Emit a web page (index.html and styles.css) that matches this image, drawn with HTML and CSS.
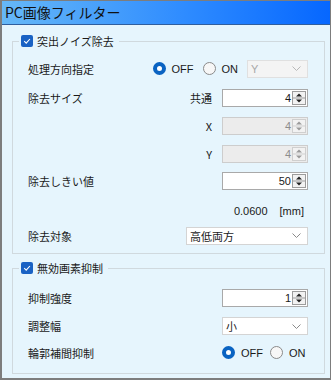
FILE: index.html
```html
<!DOCTYPE html>
<html>
<head>
<meta charset="UTF-8">
<title>PC画像フィルター</title>
<link rel="stylesheet" href="styles.css">
</head>
<body>
<div class="window">
	<div class="titlebar">PC画像フィルター</div>

	<fieldset class="group group1">
		<legend><span class="check"><svg width="12" height="12" viewBox="0 0 12 12"><polyline points="3.2,6.2 5.2,8.1 8.9,4" fill="none" stroke="#fff" stroke-width="1.1"/></svg></span>突出ノイズ除去</legend>
		<div class="rows rows1">
			<div class="row">
				<span class="label">処理方向指定</span>
				<div class="ctrl">
					<span class="radio"><i class="dot on"></i>OFF</span>
					<span class="radio"><i class="dot"></i>ON</span>
					<span class="combo dis small"><span>Y</span><svg width="9" height="5" viewBox="0 0 9 5"><polyline points="0.5,0.5 4.5,4.5 8.5,0.5" fill="none" stroke="#b8b8b8"/></svg></span>
				</div>
			</div>
			<div class="row">
				<span class="label">除去サイズ</span>
				<div class="ctrl">
					<span class="sub">共通</span>
					<span class="spin"><span class="val">4</span><svg width="14" height="14" viewBox="0 0 14 14"><rect x="0.5" y="0.5" width="13" height="13" fill="#f2f2f2" stroke="#9c9c9c"/><line x1="1" y1="7" x2="13" y2="7" stroke="#9c9c9c"/><polygon points="4,5.5 10,5.5 7,2.5" fill="#222"/><polygon points="4,8.5 10,8.5 7,11.5" fill="#222"/></svg></span>
				</div>
			</div>
			<div class="row">
				<span class="label"></span>
				<div class="ctrl">
					<span class="sub">X</span>
					<span class="spin dis"><span class="val">4</span><svg width="14" height="14" viewBox="0 0 14 14"><rect x="0.5" y="0.5" width="13" height="13" fill="#f2f2f2" stroke="#cfcfcf"/><line x1="1" y1="7" x2="13" y2="7" stroke="#cfcfcf"/><polygon points="4,5.5 10,5.5 7,2.5" fill="#9a9a9a"/><polygon points="4,8.5 10,8.5 7,11.5" fill="#9a9a9a"/></svg></span>
				</div>
			</div>
			<div class="row">
				<span class="label"></span>
				<div class="ctrl">
					<span class="sub">Y</span>
					<span class="spin dis"><span class="val">4</span><svg width="14" height="14" viewBox="0 0 14 14"><rect x="0.5" y="0.5" width="13" height="13" fill="#f2f2f2" stroke="#cfcfcf"/><line x1="1" y1="7" x2="13" y2="7" stroke="#cfcfcf"/><polygon points="4,5.5 10,5.5 7,2.5" fill="#9a9a9a"/><polygon points="4,8.5 10,8.5 7,11.5" fill="#9a9a9a"/></svg></span>
				</div>
			</div>
			<div class="row">
				<span class="label">除去しきい値</span>
				<div class="ctrl">
					<span class="spin"><span class="val">50</span><svg width="14" height="14" viewBox="0 0 14 14"><rect x="0.5" y="0.5" width="13" height="13" fill="#f2f2f2" stroke="#9c9c9c"/><line x1="1" y1="7" x2="13" y2="7" stroke="#9c9c9c"/><polygon points="4,5.5 10,5.5 7,2.5" fill="#222"/><polygon points="4,8.5 10,8.5 7,11.5" fill="#222"/></svg></span>
				</div>
			</div>
			<div class="row">
				<span class="label"></span>
				<div class="ctrl unit">
					<span>0.0600</span>
					<span>[mm]</span>
				</div>
			</div>
			<div class="row">
				<span class="label">除去対象</span>
				<div class="ctrl">
					<span class="combo wide"><span>高低両方</span><svg width="9" height="5" viewBox="0 0 9 5"><polyline points="0.5,0.5 4.5,4.5 8.5,0.5" fill="none" stroke="#8a8a8a"/></svg></span>
				</div>
			</div>
		</div>
	</fieldset>

	<fieldset class="group group2">
		<legend><span class="check"><svg width="12" height="12" viewBox="0 0 12 12"><polyline points="3.2,6.2 5.2,8.1 8.9,4" fill="none" stroke="#fff" stroke-width="1.1"/></svg></span>無効画素抑制</legend>
		<div class="rows rows2">
			<div class="row">
				<span class="label">抑制強度</span>
				<div class="ctrl">
					<span class="spin"><span class="val">1</span><svg width="14" height="14" viewBox="0 0 14 14"><rect x="0.5" y="0.5" width="13" height="13" fill="#f2f2f2" stroke="#9c9c9c"/><line x1="1" y1="7" x2="13" y2="7" stroke="#9c9c9c"/><polygon points="4,5.5 10,5.5 7,2.5" fill="#222"/><polygon points="4,8.5 10,8.5 7,11.5" fill="#222"/></svg></span>
				</div>
			</div>
			<div class="row">
				<span class="label">調整幅</span>
				<div class="ctrl">
					<span class="combo mid"><span>小</span><svg width="9" height="5" viewBox="0 0 9 5"><polyline points="0.5,0.5 4.5,4.5 8.5,0.5" fill="none" stroke="#8a8a8a"/></svg></span>
				</div>
			</div>
			<div class="row">
				<span class="label">輪郭補間抑制</span>
				<div class="ctrl radios">
					<span class="radio"><i class="dot on"></i>OFF</span>
					<span class="radio"><i class="dot"></i>ON</span>
				</div>
			</div>
		</div>
	</fieldset>
</div>
</body>
</html>
```

FILE: styles.css
```css
*{ margin:0; padding:0; box-sizing:border-box;}
body{ font-family:"Noto Sans CJK JP", sans-serif; font-size:11px; color:#1a1a1a; background:#e6f5fd;}

.window{ width:331px; height:380px; border:1px solid #7d7d7d; border-left-width:2px; border-bottom-width:2px; background:#e6f5fd;}
.titlebar{ height:24px; padding-left:3px; font-size:14px; line-height:23px; color:#111; background:linear-gradient(to right, #66b8f7, #2f8cff 55%, #0667ff); border-bottom:1px solid #2f5e9e;}

.group{ margin:9px 5px 0 10px; padding:0 0 8px 6px; border:1px solid #d0d9de;}
.group2{ margin-top:7px;}
.group legend{ display:flex; align-items:center; gap:4px; height:14px; padding:0 5px 0 2px; line-height:14px;}
.check{ display:block; width:12px; height:12px; border-radius:2px; background:#1a62c4;}
.check svg{ display:block;}

.rows{ display:grid; padding-right:16px; padding-left:9px;}
.rows1{ padding-top:6px; grid-template-rows:29px 29px 28px 27px 28px 31px 19px;}
.rows2{ padding-top:8px; grid-template-rows:29px 28px 25px;}
.row{ display:flex; align-items:center;}
.ctrl{ margin-left:auto; display:flex; align-items:center;}
.sub{ margin-right:10px;}

.radio{ display:flex; align-items:center; gap:6px; margin-right:9px; font-family:"Liberation Sans", "Noto Sans CJK JP", sans-serif;}
.radios{ width:86px;}
.radios .radio{ margin-right:7px;}
.dot{ display:block; width:13px; height:13px; border-radius:50%; border:1px solid #8a8a8a; background:#f7f7f7;}
.dot.on{ border:4px solid #0a63c2; background:#fff;}

.spin{ width:86px; height:18px; display:flex; align-items:center; justify-content:flex-end; gap:1px; padding-right:1px; border:1px solid #a9a9a9; background:#fff; font-family:"Liberation Sans", sans-serif;}
.spin svg{ display:block;}
.spin.dis{ background:#ececec; border-color:#cdcdcd; color:#8c8c8c;}

.combo{ height:18px; display:flex; align-items:center; justify-content:space-between; padding:0 6px 0 3px; border:1px solid #d4d4d4; background:#fff;}
.combo svg{ display:block;}
.combo.small{ width:61px;}
.combo.wide{ width:122px;}
.combo.mid{ width:86px;}
.combo.dis{ background:#f4f4f4; border-color:#e0e0e0; color:#a8a8a8; font-family:"Liberation Sans", sans-serif;}

.unit{ gap:12px; padding-right:4px; font-family:"Liberation Sans", sans-serif;}
```
